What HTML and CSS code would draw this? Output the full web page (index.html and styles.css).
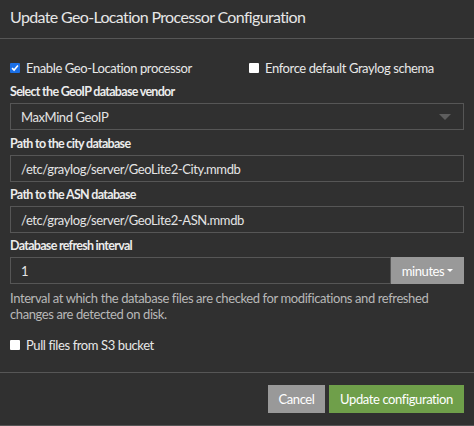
FILE: index.html
```html
<!DOCTYPE html>
<html>
<head>
<meta charset="utf-8">
<link rel="stylesheet" href="styles.css">
</head>
<body>
<div class="modal">
  <div class="modal-header">
    <h4 class="title">Update Geo-Location Processor Configuration</h4>
  </div>
  <div class="modal-body">
    <div class="check-row">
      <label class="check first"><span class="box checked"><svg width="9" height="9" viewBox="0 0 9 9"><path d="M1.2 4.6 L3.5 6.9 L7.8 1.8" fill="none" stroke="#fff" stroke-width="1.8"/></svg></span>Enable Geo-Location processor</label>
      <label class="check"><span class="box"></span>Enforce default Graylog schema</label>
    </div>
    <div class="group first-group">
      <div class="label">Select the GeoIP database vendor</div>
      <div class="field select">MaxMind GeoIP<span class="caret-big"></span></div>
    </div>
    <div class="group second-group">
      <div class="label">Path to the city database</div>
      <div class="field">/etc/graylog/server/GeoLite2-City.mmdb</div>
    </div>
    <div class="group">
      <div class="label">Path to the ASN database</div>
      <div class="field">/etc/graylog/server/GeoLite2-ASN.mmdb</div>
    </div>
    <div class="group">
      <div class="label">Database refresh interval</div>
      <div class="input-group">
        <div class="field grow">1</div>
        <div class="addon">minutes<span class="caret"></span></div>
      </div>
      <div class="help">Interval at which the database files are checked for modifications and refreshed changes are detected on disk.</div>
    </div>
    <label class="check s3"><span class="box"></span>Pull files from S3 bucket</label>
  </div>
  <div class="modal-footer">
    <button class="btn btn-default">Cancel</button>
    <button class="btn btn-success">Update configuration</button>
  </div>
</div>
</body>
</html>
```

FILE: styles.css
```css
html, body {
  margin: 0;
  padding: 0;
  background: #303030;
}
body {
  font-family: Lato, "Noto Sans", sans-serif;
  color: #e4e4e4;
  font-size: 13px;
  letter-spacing: -0.4px;
}
.modal {
  width: 474px;
  height: 426px;
  box-sizing: border-box;
  border-bottom: 1px solid #555;
  display: flex;
  flex-direction: column;
}
.modal-header {
  height: 38px;
  box-sizing: content-box;
  border-bottom: 1px solid #565656;
  padding: 0 10px;
  display: flex;
  align-items: center;
}
.title {
  margin: 0 0 5px 0;
  font-size: 16px;
  font-weight: 400;
  letter-spacing: -0.65px;
  color: #e6e6e6;
  line-height: 20px;
}
.modal-body {
  padding: 21px 10px 0 10px;
  flex: 1;
}
.check-row {
  display: flex;
}
.check.first {
  width: 239px;
}
.check {
  display: flex;
  align-items: center;
  height: 16px;
  font-size: 13px;
  color: #e8e8e8;
}
.box {
  width: 10px;
  height: 10px;
  background: #fff;
  border-radius: 1px;
  margin-right: 6px;
  box-sizing: border-box;
  display: flex;
  align-items: center;
  justify-content: center;
  flex: none;
}
.box.checked {
  background: #1a6fe6;
}
.box svg {
  width: 8px;
  height: 8px;
}
.group {
  margin-top: 5px;
}
.first-group {
  margin-top: 8px;
}
.second-group {
  margin-top: 6px;
}
.label {
  font-weight: 700;
  font-size: 12.5px;
  letter-spacing: -0.7px;
  color: #ececec;
  height: 15px;
  line-height: 16px;
  margin-bottom: 4px;
}
.field {
  height: 27px;
  border: 1px solid #565656;
  box-sizing: border-box;
  padding: 0 10px;
  display: flex;
  align-items: center;
  font-size: 13px;
  color: #e4e4e4;
}
.select {
  justify-content: space-between;
}
.caret-big {
  width: 0;
  height: 0;
  border-left: 6px solid transparent;
  border-right: 6px solid transparent;
  border-top: 6px solid #5e5e5e;
  margin-right: 2px;
}
.input-group {
  display: flex;
}
.grow {
  flex: 1;
}
.addon {
  width: 73px;
  height: 27px;
  background: #999;
  color: #fff;
  display: flex;
  align-items: center;
  justify-content: center;
  font-size: 13px;
}
.caret {
  width: 0;
  height: 0;
  border-left: 3px solid transparent;
  border-right: 3px solid transparent;
  border-top: 3px solid #fff;
  margin-left: 3px;
}
.help {
  margin-top: 6px;
  font-size: 13px;
  line-height: 16px;
  color: #b8b8b8;
}
.s3 {
  margin-top: 15px;
}
.modal-footer {
  height: 52px;
  border-top: 1px solid #565656;
  display: flex;
  justify-content: flex-end;
  align-items: center;
  gap: 4px;
  padding: 0 10px;
}
.btn {
  height: 28px;
  border: none;
  font-family: Lato, "Noto Sans", sans-serif;
  font-size: 13px;
  letter-spacing: -0.4px;
  color: #fff;
  padding: 0;
  white-space: nowrap;
}
.btn-default {
  background: #999;
  width: 57px;
}
.btn-success {
  background: #6f9f4a;
  width: 135px;
}
```
